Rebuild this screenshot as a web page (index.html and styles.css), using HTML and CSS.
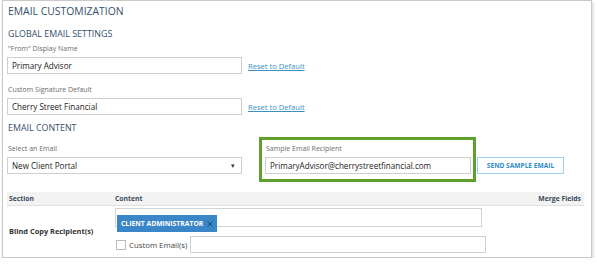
FILE: index.html
```html
<!DOCTYPE html>
<html lang="en">
<head>
    <meta charset="UTF-8">
    <meta name="viewport" content="width=device-width, initial-scale=1.0">
    <title>Email Customization</title>
    <link rel="stylesheet" href="styles.css">
</head>
<body>
    <div class="panel">
        <h1 class="page-title">EMAIL CUSTOMIZATION</h1>

        <h2 class="section-title">GLOBAL EMAIL SETTINGS</h2>
        <div class="field">
            <label class="field-label">"From" Display Name</label>
            <div class="field-row">
                <div class="text-input wide">Primary Advisor</div>
                <a class="reset-link" href="#">Reset to Default</a>
            </div>
        </div>
        <div class="field">
            <label class="field-label">Custom Signature Default</label>
            <div class="field-row">
                <div class="text-input wide">Cherry Street Financial</div>
                <a class="reset-link" href="#">Reset to Default</a>
            </div>
        </div>

        <h2 class="section-title content-title">EMAIL CONTENT</h2>
        <div class="content-row">
            <div class="select-col">
                <label class="field-label">Select an Email</label>
                <div class="text-input wide select">
                    <span>New Client Portal</span>
                    <span class="caret">&#9662;</span>
                </div>
            </div>
            <div class="highlight">
                <label class="field-label">Sample Email Recipient</label>
                <div class="text-input email">PrimaryAdvisor@cherrystreetfinancial.com</div>
            </div>
            <button class="send-btn" type="button">SEND SAMPLE EMAIL</button>
        </div>

        <div class="grid">
            <div class="grid-head">
                <span class="col-section">Section</span>
                <span class="col-content">Content</span>
                <span class="col-merge">Merge Fields</span>
            </div>
            <div class="grid-row">
                <div class="col-section row-name">Blind Copy Recipient(s)</div>
                <div class="col-content">
                    <div class="tag-box">
                        <span class="tag">CLIENT ADMINISTRATOR
                            <svg class="tag-x" width="6" height="6" viewBox="0 0 6 6"><path d="M0.5 0.5 L5.5 5.5 M5.5 0.5 L0.5 5.5" stroke="#1f4a74" stroke-width="1"/></svg>
                        </span>
                    </div>
                    <div class="custom-row">
                        <span class="checkbox"></span>
                        <span class="custom-label">Custom Email(s)</span>
                        <div class="text-input custom-input"></div>
                    </div>
                </div>
            </div>
        </div>
    </div>
</body>
</html>
```

FILE: styles.css
```css
body {
    margin: 0;
    background: #fff;
    font-family: "Open Sans", Arial, sans-serif;
    color: #333;
}
.panel {
    margin-left: 2px;
    width: 584px;
    height: 256px;
    border: 1px solid #c9c9c9;
    box-shadow: 1px 2px 3px rgba(0, 0, 0, 0.18);
    padding: 0 0 0 4px;
    box-sizing: content-box;
}
.page-title {
    margin: 0;
    padding: 3px 0 0 1px;
    font-size: 10.4px;
    line-height: 15px;
    font-weight: normal;
    color: #34506e;
}
.section-title {
    margin: 9px 0 0 0;
    padding-left: 1px;
    font-size: 8.9px;
    line-height: 12px;
    font-weight: normal;
    color: #34506e;
}
.field {
    margin-top: 4px;
}
.field + .field {
    margin-top: 11px;
}
.field-label {
    display: block;
    font-size: 7px;
    line-height: 10px;
    color: #6d6d6d;
    padding-left: 1px;
    margin-bottom: 3px;
}
.field-row {
    display: flex;
    align-items: center;
}
.text-input {
    box-sizing: border-box;
    height: 17px;
    border: 1px solid #cfcfcf;
    padding: 0 4px;
    font-size: 8.1px;
    line-height: 15px;
    color: #222;
    background: #fff;
    white-space: nowrap;
}
.wide {
    width: 235px;
}
.reset-link {
    margin-left: 6px;
    font-size: 7.6px;
    color: #3c8fc2;
    text-decoration: underline;
}
.content-title {
    margin-top: 7px;
}
.content-row {
    display: flex;
    align-items: flex-end;
    margin-top: 3px;
}
.select-col {
    margin-bottom: 8px;
}
.select {
    display: flex;
    justify-content: space-between;
}
.caret {
    font-size: 7px;
    color: #333;
    margin-right: 2px;
}
.highlight {
    margin-left: 17px;
    border: 3px solid #5ea02b;
    padding: 4px 2px 5px 3px;
}
.email {
    width: 206px;
}
.send-btn {
    box-sizing: border-box;
    margin: 0 0 8px 1px;
    width: 87px;
    height: 17px;
    border: 1px solid #9dd2ee;
    background: #fff;
    color: #2f8dc9;
    font-family: inherit;
    font-size: 6.6px;
    font-weight: bold;
    padding: 0;
}
.grid {
    margin-top: 10px;
    width: 577px;
}
.grid-head {
    display: flex;
    height: 13px;
    background: #f3f3f3;
    border-bottom: 1px solid #e1e1e1;
    font-size: 6.8px;
    line-height: 13px;
    font-weight: bold;
    color: #3b4a5c;
}
.col-section {
    width: 108px;
    padding-left: 2px;
    box-sizing: border-box;
}
.col-content {
    flex: 1;
}
.col-merge {
    padding-right: 3px;
}
.grid-row {
    display: flex;
    align-items: center;
}
.row-name {
    font-size: 7.4px;
    font-weight: bold;
    color: #333;
    padding-top: 3px;
}
.grid-row .col-content {
    padding-top: 2px;
}
.tag-box {
    box-sizing: border-box;
    width: 367px;
    height: 19px;
    border: 1px solid #d3d3d3;
    padding: 0 1px;
}
.tag {
    display: inline-flex;
    align-items: center;
    height: 17px;
    padding: 0 4px;
    background: #3b86c8;
    color: #fff;
    font-size: 6.8px;
    font-weight: bold;
    white-space: nowrap;
}
.tag-x {
    margin-left: 4px;
}
.custom-row {
    display: flex;
    align-items: center;
    margin-top: 9px;
}
.checkbox {
    width: 8px;
    height: 8px;
    border: 1px solid #bbb;
    margin-left: 1px;
    background: #fff;
}
.custom-label {
    margin-left: 3px;
    font-size: 7.8px;
    color: #444;
}
.custom-input {
    margin-left: 3px;
    width: 296px;
}
```
